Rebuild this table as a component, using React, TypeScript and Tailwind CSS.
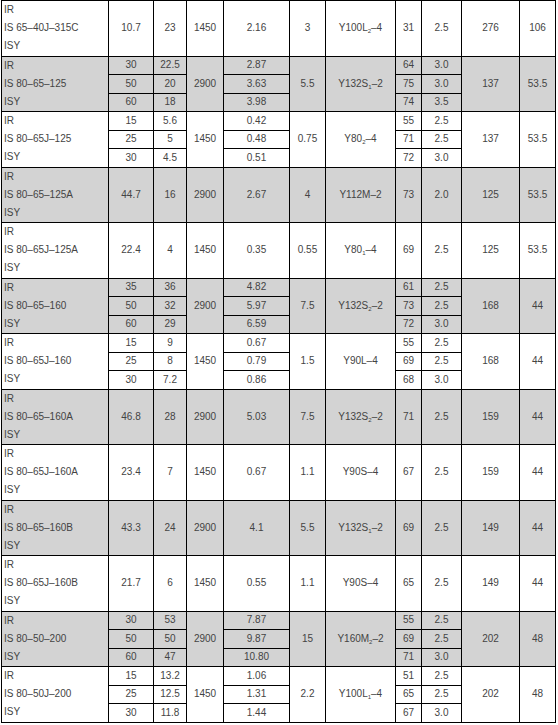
import * as React from "react"

type Sub = [string, string, string, string, string]

interface Group {
  name: string
  grey: boolean
  speed: string
  motorKw: string
  model: React.ReactNode
  weight: string
  last: string
  // multi-point groups have three duty points
  subs?: Sub[]
  // single-point groups
  flow?: string
  head?: string
  shaft?: string
  eff?: string
  npsh?: string
}

function M({ base, sub, tail }: { base: string; sub?: string; tail: string }) {
  return (
    <>
      {base}
      {sub && <span className="relative top-[2px] text-[6px]">{sub}</span>}
      {tail}
    </>
  )
}

const groups: Group[] = [
  {
    name: "IS 65–40J–315C", grey: false, flow: "10.7", head: "23", speed: "1450", shaft: "2.16",
    motorKw: "3", model: <M base="Y100L" sub="2" tail="–4" />, eff: "31", npsh: "2.5", weight: "276", last: "106",
  },
  {
    name: "IS 80–65–125", grey: true, speed: "2900", motorKw: "5.5", model: <M base="Y132S" sub="1" tail="–2" />,
    weight: "137", last: "53.5",
    subs: [
      ["30", "22.5", "2.87", "64", "3.0"],
      ["50", "20", "3.63", "75", "3.0"],
      ["60", "18", "3.98", "74", "3.5"],
    ],
  },
  {
    name: "IS 80–65J–125", grey: false, speed: "1450", motorKw: "0.75", model: <M base="Y80" sub="2" tail="–4" />,
    weight: "137", last: "53.5",
    subs: [
      ["15", "5.6", "0.42", "55", "2.5"],
      ["25", "5", "0.48", "71", "2.5"],
      ["30", "4.5", "0.51", "72", "3.0"],
    ],
  },
  {
    name: "IS 80–65–125A", grey: true, flow: "44.7", head: "16", speed: "2900", shaft: "2.67",
    motorKw: "4", model: <M base="Y112M" tail="–2" />, eff: "73", npsh: "2.0", weight: "125", last: "53.5",
  },
  {
    name: "IS 80–65J–125A", grey: false, flow: "22.4", head: "4", speed: "1450", shaft: "0.35",
    motorKw: "0.55", model: <M base="Y80" sub="1" tail="–4" />, eff: "69", npsh: "2.5", weight: "125", last: "53.5",
  },
  {
    name: "IS 80–65–160", grey: true, speed: "2900", motorKw: "7.5", model: <M base="Y132S" sub="2" tail="–2" />,
    weight: "168", last: "44",
    subs: [
      ["35", "36", "4.82", "61", "2.5"],
      ["50", "32", "5.97", "73", "2.5"],
      ["60", "29", "6.59", "72", "3.0"],
    ],
  },
  {
    name: "IS 80–65J–160", grey: false, speed: "1450", motorKw: "1.5", model: <M base="Y90L" tail="–4" />,
    weight: "168", last: "44",
    subs: [
      ["15", "9", "0.67", "55", "2.5"],
      ["25", "8", "0.79", "69", "2.5"],
      ["30", "7.2", "0.86", "68", "3.0"],
    ],
  },
  {
    name: "IS 80–65–160A", grey: true, flow: "46.8", head: "28", speed: "2900", shaft: "5.03",
    motorKw: "7.5", model: <M base="Y132S" sub="2" tail="–2" />, eff: "71", npsh: "2.5", weight: "159", last: "44",
  },
  {
    name: "IS 80–65J–160A", grey: false, flow: "23.4", head: "7", speed: "1450", shaft: "0.67",
    motorKw: "1.1", model: <M base="Y90S" tail="–4" />, eff: "67", npsh: "2.5", weight: "159", last: "44",
  },
  {
    name: "IS 80–65–160B", grey: true, flow: "43.3", head: "24", speed: "2900", shaft: "4.1",
    motorKw: "5.5", model: <M base="Y132S" sub="1" tail="–2" />, eff: "69", npsh: "2.5", weight: "149", last: "44",
  },
  {
    name: "IS 80–65J–160B", grey: false, flow: "21.7", head: "6", speed: "1450", shaft: "0.55",
    motorKw: "1.1", model: <M base="Y90S" tail="–4" />, eff: "65", npsh: "2.5", weight: "149", last: "44",
  },
  {
    name: "IS 80–50–200", grey: true, speed: "2900", motorKw: "15", model: <M base="Y160M" sub="2" tail="–2" />,
    weight: "202", last: "48",
    subs: [
      ["30", "53", "7.87", "55", "2.5"],
      ["50", "50", "9.87", "69", "2.5"],
      ["60", "47", "10.80", "71", "3.0"],
    ],
  },
  {
    name: "IS 80–50J–200", grey: false, speed: "1450", motorKw: "2.2", model: <M base="Y100L" sub="1" tail="–4" />,
    weight: "202", last: "48",
    subs: [
      ["15", "13.2", "1.06", "51", "2.5"],
      ["25", "12.5", "1.31", "65", "2.5"],
      ["30", "11.8", "1.44", "67", "3.0"],
    ],
  },
]

const cell = "border border-black p-0 text-center align-middle"

function NameCell({ name }: { name: string }) {
  return (
    <td rowSpan={3} className="border border-black p-0 pl-[2px] text-left align-middle">
      <div className="leading-[18px]">IR</div>
      <div className="leading-[18px]">{name}</div>
      <div className="leading-[18px]">ISY</div>
    </td>
  )
}

function GroupRows({ g }: { g: Group }) {
  const bg = g.grey ? "bg-[#d3d3d3]" : "bg-white"
  if (!g.subs) {
    return (
      <>
        <tr className={`h-[18.5px] ${bg}`}>
          <NameCell name={g.name} />
          <td rowSpan={3} className={cell}>{g.flow}</td>
          <td rowSpan={3} className={cell}>{g.head}</td>
          <td rowSpan={3} className={cell}>{g.speed}</td>
          <td rowSpan={3} className={cell}>{g.shaft}</td>
          <td rowSpan={3} className={cell}>{g.motorKw}</td>
          <td rowSpan={3} className={cell}>{g.model}</td>
          <td rowSpan={3} className={cell}>{g.eff}</td>
          <td rowSpan={3} className={cell}>{g.npsh}</td>
          <td rowSpan={3} className={cell}>{g.weight}</td>
          <td rowSpan={3} className={cell}>{g.last}</td>
        </tr>
        <tr className={`h-[18.5px] ${bg}`} />
        <tr className={`h-[18.5px] ${bg}`} />
      </>
    )
  }
  return (
    <>
      {g.subs.map((s, i) => (
        <tr key={i} className={`h-[18.5px] ${bg}`}>
          {i === 0 && <NameCell name={g.name} />}
          <td className={cell}>{s[0]}</td>
          <td className={cell}>{s[1]}</td>
          {i === 0 && <td rowSpan={3} className={cell}>{g.speed}</td>}
          <td className={cell}>{s[2]}</td>
          {i === 0 && <td rowSpan={3} className={cell}>{g.motorKw}</td>}
          {i === 0 && <td rowSpan={3} className={cell}>{g.model}</td>}
          <td className={cell}>{s[3]}</td>
          <td className={cell}>{s[4]}</td>
          {i === 0 && <td rowSpan={3} className={cell}>{g.weight}</td>}
          {i === 0 && <td rowSpan={3} className={cell}>{g.last}</td>}
        </tr>
      ))}
    </>
  )
}

export default function App() {
  return (
    <div className="min-h-[725px] bg-white pl-[1px] font-['Liberation_Sans',Arial,sans-serif] text-[10px] leading-none text-[#444]">
      <table className="w-[554px] table-fixed border-collapse">
        <colgroup>
          <col className="w-[107px]" />
          <col className="w-[45px]" />
          <col className="w-[33px]" />
          <col className="w-[37px]" />
          <col className="w-[66px]" />
          <col className="w-[36px]" />
          <col className="w-[70px]" />
          <col className="w-[26px]" />
          <col className="w-[40px]" />
          <col className="w-[58px]" />
          <col className="w-[36px]" />
        </colgroup>
        <tbody>
          {groups.map((g) => (
            <GroupRows key={g.name} g={g} />
          ))}
        </tbody>
      </table>
    </div>
  )
}
